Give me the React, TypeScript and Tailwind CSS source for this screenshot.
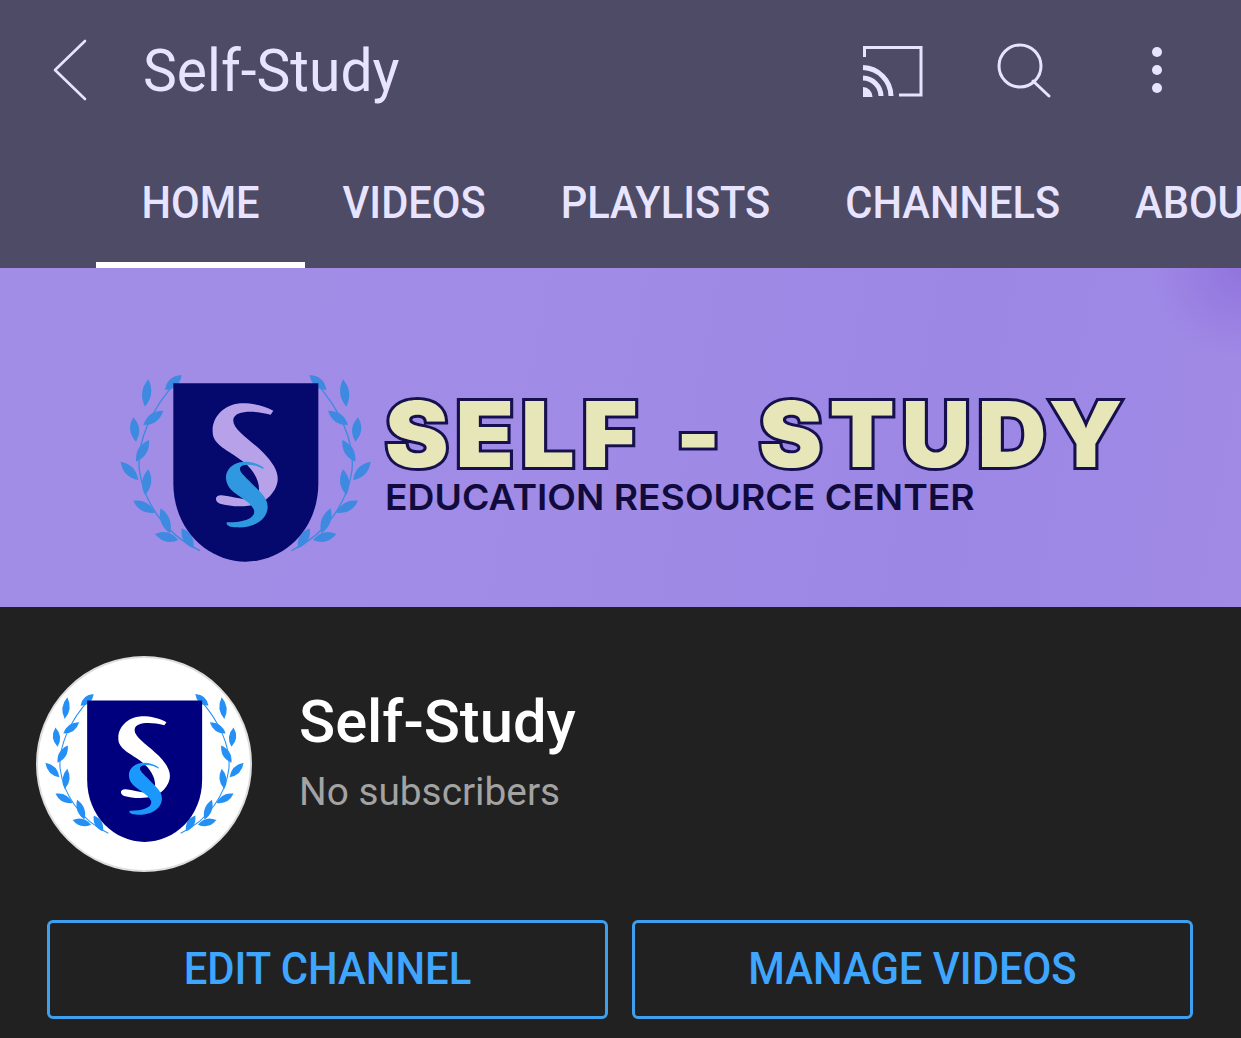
const roboto = { fontFamily: "Roboto, sans-serif" };

type Pt = [number, number];
const LEAVES: [Pt, Pt][] = [
  [[245, 45], [195, 90]],
  [[145, 58], [135, 140]],
  [[190, 152], [130, 195]],
  [[100, 172], [108, 245]],
  [[147, 240], [108, 305]],
  [[62, 305], [115, 360]],
  [[145, 328], [135, 405]],
  [[100, 422], [165, 458]],
  [[182, 445], [210, 520]],
  [[165, 522], [235, 540]],
  [[245, 505], [280, 565]],
];

function leaf(a: Pt, b: Pt, w = 17) {
  const mx = (a[0] + b[0]) / 2;
  const my = (a[1] + b[1]) / 2;
  const dx = b[0] - a[0];
  const dy = b[1] - a[1];
  const l = Math.hypot(dx, dy);
  const nx = (-dy / l) * w * 1.6;
  const ny = (dx / l) * w * 1.6;
  return `M${a[0]} ${a[1]}Q${mx + nx} ${my + ny} ${b[0]} ${b[1]}Q${mx - nx} ${my - ny} ${a[0]} ${a[1]}Z`;
}

function Logo({ shield, big, small, leafColor, className }: { shield: string; big: string; small: string; leafColor: string; className: string }) {
  const Branch = (
    <g fill={leafColor}>
      <path d="M300 572C190 520 130 420 118 330C110 250 150 150 232 62" fill="none" stroke={leafColor} strokeWidth="4" />
      {LEAVES.map((p, i) => (
        <path key={i} d={leaf(p[0], p[1])} />
      ))}
    </g>
  );
  return (
    <svg viewBox="0 0 855 660" className={className}>
      {Branch}
      <g transform="translate(874 0) scale(-1 1)">{Branch}</g>
      <path d="M220 70H655V370C655 510 550 605 437 605C325 605 220 510 220 370Z" fill={shield} />
      <path
        d="M520 152C490 135 450 128 420 130C370 135 336 172 338 215C338 255 385 270 430 305C465 332 490 380 470 416C440 424 400 410 365 406C343 405 343 425 360 431C400 442 475 447 510 408C550 362 535 325 490 278C450 238 396 208 400 178C404 152 460 150 512 164Z"
        fill={big}
      />
      <path
        d="M490 322C465 305 430 300 405 312C380 325 370 350 385 378C400 405 450 420 462 450C468 475 430 488 380 487C378 497 390 502 410 502C460 505 503 480 503 440C503 410 472 390 445 360C425 340 408 325 430 316C450 310 475 318 490 328Z"
        fill={small}
      />
    </svg>
  );
}

function CastIcon() {
  return (
    <svg viewBox="0 0 66 56" className="ml-[-3px] h-[56px] w-[66px] translate-y-[1px]" fill="none" stroke="#e8e4ff">
      <path d="M3.5 14V4.5H60V52H38" strokeWidth="3" />
      <path d="M2 24.5A29 29 0 0 1 30 53" strokeWidth="5" />
      <path d="M2 35A18.5 18.5 0 0 1 20 53" strokeWidth="5" />
      <path d="M2 44V54H11.5A10 10 0 0 0 2 44Z" fill="#e8e4ff" stroke="none" />
    </svg>
  );
}

function Tab({ label, active }: { label: string; active?: boolean }) {
  return (
    <div
      className={
        active
          ? "relative flex h-full w-[209px] shrink-0 items-center justify-center pb-[3px]"
          : "flex h-full shrink-0 items-center px-[37.5px] pb-[3px]"
      }
    >
      <span className="block origin-center scale-y-[1.06] text-[41.6px] font-medium leading-none text-[#e8e4ff]">{label}</span>
      {active && <div className="absolute inset-x-0 bottom-0 h-[6px] bg-white" />}
    </div>
  );
}

function OutlineButton({ label }: { label: string }) {
  return (
    <button className="flex h-[99px] flex-1 items-center justify-center rounded-[6px] border-[3px] border-[#3f9fef] bg-transparent pb-[1px]">
      <span className="block scale-y-[1.08] text-[41.8px] font-medium leading-none text-[#3ea6ff]">{label}</span>
    </button>
  );
}

export default function App() {
  return (
    <div style={roboto} className="flex h-[1038px] w-[1241px] flex-col overflow-hidden bg-[#212121]">
      <header className="flex h-[268px] shrink-0 flex-col bg-[#4e4b66]">
        <div className="flex h-[140px] shrink-0 items-center pl-[52px]">
          <svg viewBox="0 0 36 62" className="h-[62px] w-[36px] shrink-0" fill="none" stroke="#e8e4ff" strokeWidth="2.6" strokeLinecap="round" strokeLinejoin="round">
            <path d="M33 2L3 31L33 60" />
          </svg>
          <span className="ml-[55px] block scale-y-[1.03] text-[57px] leading-none text-[#e8e4ff]">Self-Study</span>
          <div className="ml-auto flex items-center pr-[79px]">
            <CastIcon />
            <svg viewBox="0 0 58 58" className="ml-[68px] h-[58px] w-[58px]" fill="none" stroke="#e8e4ff" strokeWidth="3">
              <circle cx="25" cy="25" r="21" />
              <path d="M38 40L54 55" strokeLinecap="round" />
            </svg>
            <div className="ml-[99px] flex flex-col gap-[8px]">
              <div className="h-[10px] w-[10px] rounded-full bg-[#e8e4ff]" />
              <div className="h-[10px] w-[10px] rounded-full bg-[#e8e4ff]" />
              <div className="h-[10px] w-[10px] rounded-full bg-[#e8e4ff]" />
            </div>
          </div>
        </div>
        <nav className="flex h-[128px] items-stretch overflow-hidden pl-[96px]">
          <Tab label="HOME" active />
          <Tab label="VIDEOS" />
          <Tab label="PLAYLISTS" />
          <Tab label="CHANNELS" />
          <Tab label="ABOUT" />
        </nav>
      </header>

      <section className="flex h-[339px] shrink-0 items-start overflow-hidden bg-[radial-gradient(circle_at_100%_0%,#9273de_0%,transparent_7%),linear-gradient(100deg,#a28de6_0%,#a08be6_45%,#9c87e5_75%,#a08ae5_100%)] pl-[100px] pt-[92px]">
        <Logo shield="#05086c" big="#b7a2ea" small="#2f98e0" leafColor="#3d8ae0" className="h-[220px] w-[285px] shrink-0" />
        <div className="flex flex-col pt-[32px]">
          <div
            style={{ fontFamily: "Inter, sans-serif" }}
            className="h-[84px] origin-left scale-x-[1.05] whitespace-nowrap text-[91px] font-black leading-[84px] tracking-[6.5px] [word-spacing:5px] text-[#e6e6b8] [-webkit-text-stroke:6px_#17104f] [paint-order:stroke_fill]"
          >
            SELF - STUDY
          </div>
          <div
            style={{ fontFamily: "Inter, sans-serif" }}
            className="mt-[3px] origin-left scale-x-[1.036] whitespace-nowrap text-[36px] font-semibold leading-[36px] text-[#110b3d]"
          >
            EDUCATION RESOURCE CENTER
          </div>
        </div>
      </section>

      <section className="mt-[49px] flex h-[216px] items-start pl-[36px]">
        <div className="relative h-[216px] w-[216px] shrink-0 overflow-hidden rounded-full border-2 border-[#dddddd] bg-white">
          <Logo shield="#00007e" big="#ffffff" small="#1a98fb" leafColor="#2490f5" className="absolute left-[-9px] top-[24px] h-[174.5px] w-[226px] max-w-none" />
        </div>
        <div className="ml-[47px] flex flex-col pt-[35px]">
          <span className="block text-[59.7px] font-medium leading-[62px] text-white">Self-Study</span>
          <span className="mt-[19px] block text-[38.8px] leading-[40px] text-[#a3a3a3]">No subscribers</span>
        </div>
      </section>

      <div className="mt-[48px] flex gap-[24px] pl-[47px] pr-[48px]">
        <OutlineButton label="EDIT CHANNEL" />
        <OutlineButton label="MANAGE VIDEOS" />
      </div>
    </div>
  );
}
